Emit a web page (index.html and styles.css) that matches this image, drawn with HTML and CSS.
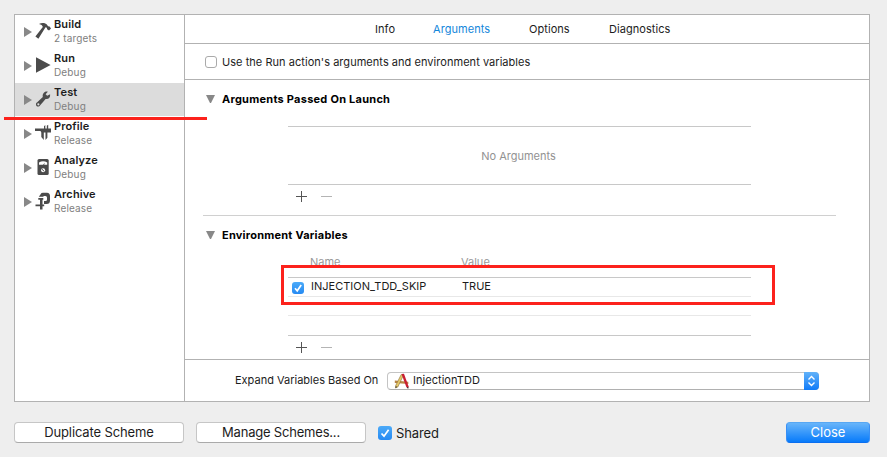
FILE: index.html
```html
<!DOCTYPE html>
<html lang="en">
<head>
<meta charset="utf-8">
<title>Scheme Editor</title>
<link rel="stylesheet" href="styles.css">
</head>
<body>
<main class="sheet">
  <div class="panel">
    <nav class="sidebar">
      <div class="action">
        <i class="disclosure"></i>
        <svg class="icon" viewBox="0 0 16 18"><path d="M4 2C6.500.6 9.500.6 11.600 2.300l1.500 2 1.500.1 1.400 2.100-2 2-1.900-1.200-.2-1.500-1.400-.6L3.400 16.800.4 14.600 7.800 5C7.600 3.300 6 2.500 4 2z"/></svg>
        <div><div class="title">Build</div><div class="sub">2 targets</div></div>
      </div>
      <div class="action">
        <i class="disclosure"></i>
        <svg class="icon" viewBox="0 0 16 18"><path d="M1 1.300L15.600 9 1 16.700z"/></svg>
        <div><div class="title">Run</div><div class="sub">Debug</div></div>
      </div>
      <div class="action selected">
        <i class="disclosure"></i>
        <svg class="icon" viewBox="0 0 16 18"><path fill-rule="evenodd" d="M12.800 1.700L10.600 4.200l1.600 1.600 2.900-1.600c.5 3.500-1.700 5.200-4.500 4.700L5.200 15.200C4 17.500.6 16.600 1 13.900c.1-1 .8-1.500 1.500-2L7.800 7C7.200 3.700 9.500.9 12.800 1.700zM3.300 13.200a1.100 1.100 0 1 0 .1 2.200 1.100 1.100 0 0 0-.1-2.200z"/></svg>
        <div><div class="title">Test</div><div class="sub">Debug</div></div>
      </div>
      <div class="action">
        <i class="disclosure"></i>
        <svg class="icon" viewBox="0 0 16 18"><path d="M0 4.500h9V2.300l1.300-1.200v3.400h1.500V1.800l1.400-1.100v3.800H16v4h-3.600v5.200L10.500 16V8.500H8.800V16L6.300 13V8.500L5.500 7H0z"/></svg>
        <div><div class="title">Profile</div><div class="sub">Release</div></div>
      </div>
      <div class="action">
        <i class="disclosure"></i>
        <svg class="icon" viewBox="0 0 16 18"><rect x="2.500" y="1" width="11.200" height="16" rx="1.500"/><path class="cut" d="M4 6.700V4.600Q8 1.700 12.200 4.600v2.100H9.100l.9-2L8 6.700z"/><circle class="cut" cx="8.100" cy="12.300" r="2"/><path class="stroke" d="M7 11.300l2.200 2"/></svg>
        <div><div class="title">Analyze</div><div class="sub">Debug</div></div>
      </div>
      <div class="action">
        <i class="disclosure"></i>
        <svg class="icon" viewBox="0 0 16 18"><path d="M3.800 4.700L6.500 1Q7 .8 8 .8h4Q15 1 15 4v4.500q0 3.500-3.500 3.500H9V9h1.500q1.500 0 1.500-1.500V5.500Q12 4 10.500 4H8.500v.7zM3.300 6h5v1.700H7.500v4.800h1.700v1.700H7.500v3.300H5v-3.300H.5v-1.700H5V7.700H3.300z"/></svg>
        <div><div class="title">Archive</div><div class="sub">Release</div></div>
      </div>
      <div class="underline-mark"></div>
    </nav>
    <section class="detail">
      <div class="tabs">
        <span class="tab info">Info</span><span class="tab arguments">Arguments</span><span class="tab options">Options</span><span class="tab diagnostics">Diagnostics</span>
      </div>
      <div class="inherit"><span class="box"></span><span class="inherit-text">Use the Run action's arguments and environment variables</span></div>
      <div class="content">
        <div class="heading"><i class="open"></i><span class="launch">Arguments Passed On Launch</span></div>
        <div class="empty-table"><span>No Arguments</span></div>
        <div class="tools"><i class="plus"></i><i class="minus"></i></div>
        <div class="separator"></div>
        <div class="heading"><i class="open"></i><span class="environment">Environment Variables</span></div>
        <div class="variables">
          <div class="columns"><span class="name">Name</span><span>Value</span></div>
          <div class="row first">
            <span class="check small"><svg viewBox="0 0 12 12"><path d="M3 6.300l2.200 2.500L9.200 3"/></svg></span>
            <span class="variable">INJECTION_TDD_SKIP</span><span class="value">TRUE</span>
          </div>
          <div class="row"></div>
          <div class="row last"></div>
          <div class="highlight"></div>
        </div>
        <div class="tools"><i class="plus"></i><i class="minus"></i></div>
      </div>
      <div class="expand">
        <span class="expand-label">Expand Variables Based On</span>
        <div class="select">
          <svg class="app" viewBox="0 0 16 16"><path d="M.8 7.500l13.500 1.200v2.400L.8 10z" fill="#b98545"/><path d="M7.200 1.500l2 1.300L3.800 14l-2.300 1 .2-2.500z" fill="#e6c868" stroke="#8b703a" stroke-width=".6"/><path d="M7.500 1L10 .8l4.500 12.500-.4 2.200-1.800-1.400z" fill="#c91f32"/><path d="M1.500 15l.3-2 1.400 1zM14.500 13.800l-.3 2-1.600-1.400z" fill="#333"/></svg>
          <span class="app-name">InjectionTDD</span>
          <span class="stepper"><svg viewBox="0 0 15 18"><path d="M4.500 7.500l3-3 3 3M4.500 10.500l3 3 3-3"/></svg></span>
        </div>
      </div>
    </section>
  </div>
  <footer class="footer">
    <div class="button"><span class="duplicate">Duplicate Scheme</span></div>
    <div class="button"><span class="manage">Manage Schemes...</span></div>
    <span class="check"><svg viewBox="0 0 14 14"><path d="M3.500 7.500l2.500 2.700L10.600 3.700"/></svg></span>
    <span class="shared">Shared</span>
    <div class="button primary"><span>Close</span></div>
  </footer>
</main>
</body>
</html>
```
FILE: styles.css
```css
* { box-sizing: border-box; }
body {
  margin: 0;
  background: #eee;
  font: 11px/14px Inter, "Liberation Sans", sans-serif;
  color: #1c1c1c;
  white-space: nowrap;
}
.sheet { height: 457px; padding: 14px 17px 0 14px; overflow: hidden; }
.panel {
  display: grid;
  grid-template-columns: 169px 1fr;
  height: 388px;
  border: 1px solid #b2b2b2;
  background: #fff;
}
.sidebar { position: relative; }
.action { display: flex; height: 34px; padding: 2px 0 0 9px; }
.selected { background: #dcdcdc; height: 33px; margin-bottom: 1px; }
.disclosure {
  width: 0;
  height: 0;
  margin: 10px 3px 0 0;
  border: solid transparent;
  border-width: 5px 0 5px 8px;
  border-left-color: #888;
}
.icon { width: 16px; height: 18px; margin: 5px 3px 0 0; fill: #4b4b4b; }
.icon .cut { fill: #fff; }
.icon .stroke { stroke: #4b4b4b; }
.title { font-size: 11px; font-weight: 600; letter-spacing: .12px; }
.sub { font-size: 10px; color: #808080; letter-spacing: .15px; }
.underline-mark { position: absolute; left: -11px; top: 102px; width: 203px; height: 3px; background: #fc221c; z-index: 2; }

.detail { display: flex; flex-direction: column; border-left: 1px solid #b2b2b2; }
.tabs { display: flex; height: 29px; padding: 7px 0 0 190px; border-bottom: 1px solid #b2b2b2; letter-spacing: .06px; }
.info { width: 58px; }
.arguments { width: 96px; color: #1487db; }
.options { width: 80px; }
.inherit { display: flex; align-items: center; height: 36px; padding-left: 20px; border-bottom: 1px solid #b2b2b2; }
.box { width: 12px; height: 12px; margin-right: 5px; border: 1px solid #aaa; border-radius: 3px; }
.inherit-text { letter-spacing: .04px; }
.content { height: 279px; }
.heading { display: flex; align-items: center; height: 38px; padding-left: 21px; font-weight: 700; color: #000; }
.launch { letter-spacing: .25px; }
.environment { letter-spacing: .22px; }
.open { width: 9px; margin-right: 7px; border: solid transparent; border-width: 8px 4.5px 0; border-top-color: #888; }
.empty-table {
  display: flex;
  align-items: center;
  justify-content: center;
  width: 463px;
  height: 59px;
  margin: 8px 0 0 103px;
  padding-right: 2px;
  border: solid #c8c8c8;
  border-width: 1px 0;
  color: #929292;
}
.tools { display: flex; align-items: center; gap: 14px; height: 23px; padding-left: 111px; }
.plus { width: 11px; height: 11px; background: linear-gradient(#555, #555) 0 5px / 11px 1px no-repeat, linear-gradient(#555, #555) 5px 0 / 1px 11px no-repeat; }
.minus { width: 11px; height: 1px; background: #b4b4b4; }
.separator { width: 633px; height: 1px; margin: 7px 0 0 18px; background: #d0d0d0; }
.variables { position: relative; width: 463px; margin-left: 103px; }
.columns { display: flex; height: 24px; padding: 1px 0 0 22px; border-bottom: 1px solid #c8c8c8; color: #999; }
.name { width: 151px; }
.row { display: flex; align-items: center; height: 19px; border-bottom: 1px solid #e8e8e8; }
.row.first { padding: 0 0 2px 4px; }
.row.last { height: 20px; border-color: #c8c8c8; }
.variable { width: 151px; margin-left: 7px; }
.highlight { position: absolute; left: -7px; top: 11px; width: 494px; height: 40px; border: 3px solid #fc221c; }
.check { width: 14px; height: 14px; border-radius: 3px; background: linear-gradient(#4caaf8, #258af3); }
.check.small { width: 12px; height: 12px; margin-top: 4px; }
.check svg { display: block; fill: none; stroke: #fff; stroke-width: 1.7; }
.expand { display: flex; align-items: center; height: 42px; padding-left: 50px; border-top: 1px solid #b2b2b2; }
.expand-label { width: 152px; padding-bottom: 2px; }
.select {
  display: flex;
  align-items: center;
  width: 432px;
  height: 18px;
  padding-left: 6px;
  border: 1px solid #c4c4c4;
  border-bottom-color: #b0b0b0;
  border-radius: 4px;
}
.app { width: 16px; height: 16px; margin-right: 3px; fill: none; }
.app-name { padding-bottom: 2px; letter-spacing: .04px; }
.stepper { width: 15px; height: 18px; margin: 0 -1px 0 auto; border-radius: 0 4px 4px 0; background: linear-gradient(#62b2f9, #107bf8); }
.stepper svg { display: block; fill: none; stroke: #fff; stroke-width: 1.4; }
.footer { display: flex; align-items: center; height: 21px; margin-top: 20px; font-size: 13px; }
.button {
  width: 170px;
  height: 21px;
  margin-right: 12px;
  border: 1px solid #c6c6c6;
  border-bottom-color: #aaa;
  border-radius: 4px;
  background: #fff;
  line-height: 19px;
  text-align: center;
}
.duplicate { letter-spacing: -.12px; }
.manage { letter-spacing: -.2px; }
.shared { margin-left: 4px; letter-spacing: -.1px; }
.primary { width: 84px; margin: 0 0 0 auto; border-color: #57a7f3 #388ff5 #0a6ff0; background: linear-gradient(#68b5fa, #087bfa); color: #fff; }
```
